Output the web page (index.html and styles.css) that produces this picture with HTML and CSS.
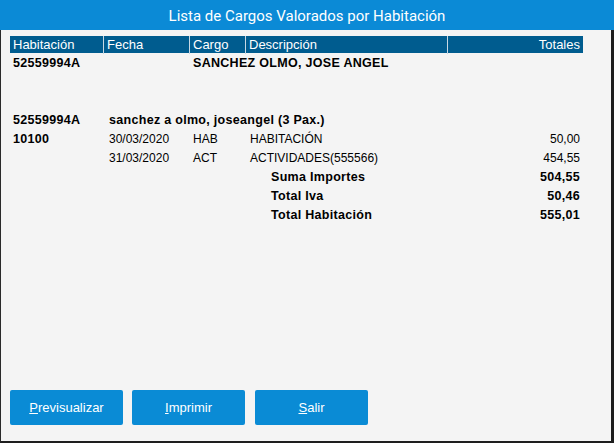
FILE: index.html
```html
<!DOCTYPE html>
<html lang="es">
<head>
<meta charset="utf-8">
<title>Lista de Cargos Valorados por Habitación</title>
<link rel="stylesheet" href="styles.css">
</head>
<body>
<div class="window">
  <div class="titlebar">Lista de Cargos Valorados por Habitación</div>
  <div class="content">
    <div class="grid head">
      <div class="hc">Habitación</div>
      <div class="hc">Fecha</div>
      <div class="hc">Cargo</div>
      <div class="hc">Descripción</div>
      <div class="hc right">Totales</div>
    </div>
    <div class="grid row b">
      <div class="c">52559994A</div>
      <div class="c"></div>
      <div class="c span3">SANCHEZ OLMO, JOSE ANGEL</div>
    </div>
    <div class="spacer"></div>
    <div class="grid row">
      <div class="c b">52559994A</div>
      <div class="c span4 b">sanchez a olmo, joseangel (3 Pax.)</div>
    </div>
    <div class="grid row">
      <div class="c b">10100</div>
      <div class="c">30/03/2020</div>
      <div class="c">HAB</div>
      <div class="c">HABITACIÓN</div>
      <div class="c right">50,00</div>
    </div>
    <div class="grid row">
      <div class="c"></div>
      <div class="c">31/03/2020</div>
      <div class="c">ACT</div>
      <div class="c">ACTIVIDADES(555566)</div>
      <div class="c right">454,55</div>
    </div>
    <div class="grid row b">
      <div class="c"></div><div class="c"></div><div class="c"></div>
      <div class="c indent">Suma Importes</div>
      <div class="c right">504,55</div>
    </div>
    <div class="grid row b">
      <div class="c"></div><div class="c"></div><div class="c"></div>
      <div class="c indent">Total Iva</div>
      <div class="c right">50,46</div>
    </div>
    <div class="grid row b">
      <div class="c"></div><div class="c"></div><div class="c"></div>
      <div class="c indent">Total Habitación</div>
      <div class="c right">555,01</div>
    </div>
    <div class="buttons">
      <button class="btn"><u>P</u>revisualizar</button>
      <button class="btn"><u>I</u>mprimir</button>
      <button class="btn third"><u>S</u>alir</button>
    </div>
  </div>
</div>
</body>
</html>
```
FILE: styles.css
```css
html, body {
  margin: 0;
  padding: 0;
  background: #f4f4f4;
}
.window {
  width: 614px;
  height: 443px;
  box-sizing: border-box;
  display: flex;
  flex-direction: column;
  background: #f4f4f4;
  font-family: "Liberation Sans", Arial, sans-serif;
}
.titlebar {
  height: 30px;
  flex: none;
  background: #0b8ad6;
  color: #fff;
  font-family: Roboto, "Liberation Sans", sans-serif;
  font-size: 15px;
  line-height: 33px;
  text-align: center;
}
.content {
  flex: 1;
  display: flex;
  flex-direction: column;
  border-left: 1px solid #2a2a2a;
  border-right: 3px solid #1e1e1e;
  border-bottom: 2px solid #1e1e1e;
  padding: 6px 28px 0 9px;
}
.grid {
  display: grid;
  grid-template-columns: 93px 86px 56px 202px 136px;
}
.head {
  background: #005c8f;
  color: #fff;
  height: 17px;
  font-size: 13px;
  line-height: 18px;
}
.hc {
  padding: 0 3px;
  border-left: 1px solid #c8d8e4;
  white-space: nowrap;
}
.hc:first-child { border-left: none; }
.row {
  height: 19px;
  font-size: 12px;
  line-height: 20px;
  color: #000;
}
.c {
  padding: 0 3px;
  white-space: nowrap;
}
.row .c:nth-child(2) { padding-left: 6px; }
.row .c:nth-child(3) { padding-left: 4px; }
.row .c:nth-child(4) { padding-left: 5px; }
.b {
  font-weight: bold;
  font-size: 12.5px;
  letter-spacing: 0.3px;
}
.right { text-align: right; }
.span3 { grid-column: span 3; }
.span4 { grid-column: span 4; }
.row .c.indent { padding-left: 26px; }
.spacer { height: 38px; }
.buttons {
  margin-top: auto;
  margin-bottom: 16px;
  display: flex;
  gap: 9px;
}
.btn {
  width: 113px;
  height: 35px;
  border: none;
  border-radius: 2px;
  background: #0a8bd5;
  color: #fff;
  font-family: "Liberation Sans", Arial, sans-serif;
  font-size: 13px;
  padding: 0;
}
.third { margin-left: 1px; }
```
